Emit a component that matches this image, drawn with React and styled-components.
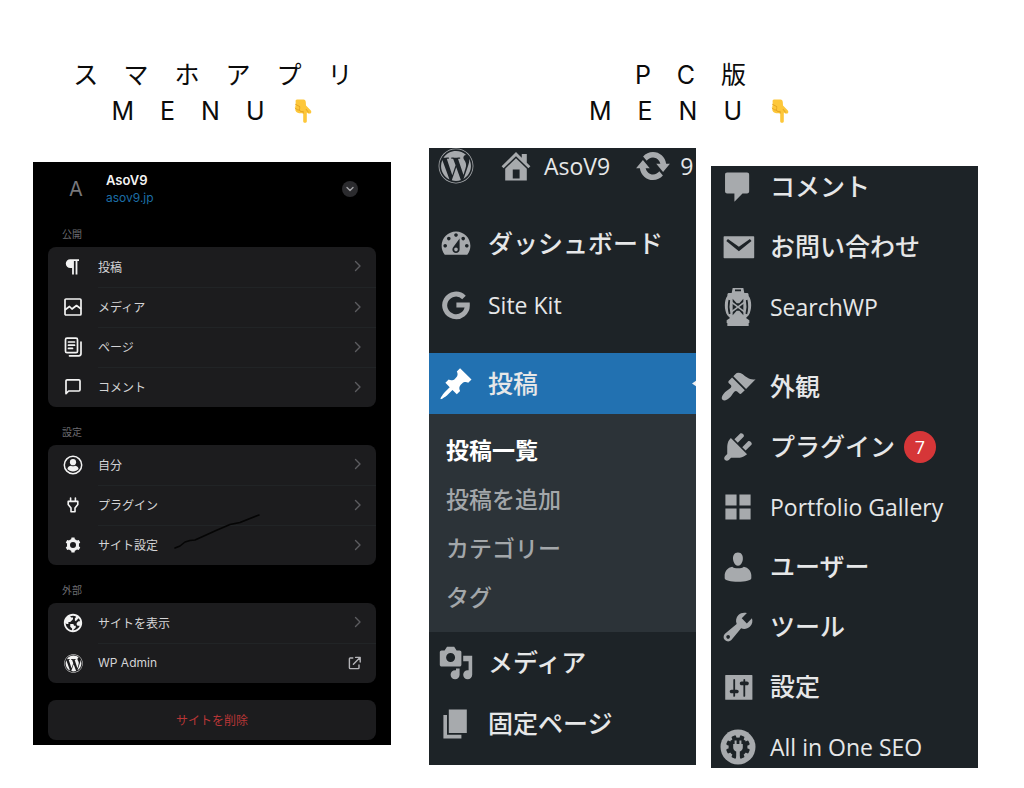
import React from "react";
import styled, { createGlobalStyle, css } from "styled-components";
import { FaWordpress } from "react-icons/fa";

const jp = `"Noto Sans CJK JP", sans-serif`;

const GlobalStyle = createGlobalStyle`
  *, *::before, *::after { box-sizing: border-box; }
  body { margin: 0; background: #fff; color: #0b0b0b; font-family: ${jp}; }
  a { color: inherit; text-decoration: none; }
  ul { list-style: none; margin: 0; padding: 0; }
  svg { display: block; flex: none; }
`;

/* ---------- page ---------- */

const Page = styled.main`
  display: flex;
  align-items: flex-start;
  gap: 38px;
  padding: 57px 46px 20px 33px;
`;

const Column = styled.section`
  flex: ${(p) => p.$grow} 1 0;
  min-width: 0;
`;

const Heading = styled.h1`
  margin: 0 0 ${(p) => p.$below}px;
  padding-left: ${(p) => p.$indent || 0}px;
  font-family: Inter, ${jp};
  font-weight: 400;
  font-size: 25px;
  line-height: 36px;
  letter-spacing: 26px;
  text-align: center;
  white-space: nowrap;
`;

const HeadingLine = styled.span`
  display: flex;
  justify-content: center;
`;

const Hand = styled.svg`
  width: 24px;
  height: 24px;
  margin: 6px 26px 0 0;
`;

const PointDown = () => (
  <Hand viewBox="0 0 24 24" role="img" aria-label="👇">
    <path
      d="M6 0.5H12.5C14 0.5 14.6 1.5 14.8 3.2L15 6.4L19.6 11.2C20.8 12.6 20.4 14.2 18.9 14.6C17.6 15 16.6 14.4 15.8 13.6V22.2C15.8 24.4 12.2 24.4 12.2 22.2V14.2H8.2C6 14 4.2 12.4 4.2 10C4 8 4.4 6.6 4.8 5.4L4.6 2.4C4.6 1.2 5 0.5 6 0.5Z"
      fill="#fdc73a"
    />
    <path
      d="M4.6 5.4L8 7.2M4.4 9.2C5.6 10.8 7 11.2 8.4 11M8.6 7.4C9 9 8.4 10.2 8.4 11C8.8 12.6 11 13 12.2 12.4V14.2M15.2 10.4L17.4 13.2"
      fill="none"
      stroke="#e5a522"
      strokeWidth="1"
      strokeLinecap="round"
    />
  </Hand>
);

/* ---------- phone app menu ---------- */

const Phone = styled.nav`
  padding: 0 15px 5px;
  background: #000;
  color: #d4d4d6;
  font-family: Inter, ${jp};
  font-size: 12px;
`;

const SiteHeader = styled.header`
  display: flex;
  align-items: center;
  height: 47px;
  padding: 7px 18px 0 21px;
`;

const SiteInitial = styled.span`
  width: 37px;
  color: #77777b;
  font-size: 20px;
  line-height: 24px;
`;

const SiteText = styled.div`
  flex: 1;
  display: flex;
  flex-direction: column;
  line-height: 18px;
`;

const SiteName = styled.strong`
  color: #f4f4f4;
  font-size: 13px;
  font-weight: 600;
`;

const SiteLink = styled.a`
  && { color: #1c6ea6; }
`;

const RoundButton = styled.button`
  display: grid;
  place-items: center;
  width: 16px;
  height: 16px;
  padding: 0;
  border: 0;
  border-radius: 50%;
  background: #2b2b2e;
  color: #a6a6aa;
`;

const GroupTitle = styled.h2`
  margin: 12px 0 0;
  padding-left: 14px;
  color: #6c6c70;
  font-size: 10px;
  font-weight: 400;
  line-height: 26px;
`;

const Card = styled.ul`
  position: relative;
  border-radius: 8px;
  background: #1c1c1e;
`;

const AppRow = styled.a`
  display: flex;
  align-items: center;
  height: 40px;
`;

const AppIcon = styled.span`
  display: grid;
  place-items: center;
  width: 50px;
  color: #f2f2f2;
`;

const AppLabel = styled.span`
  flex: 1;
  display: flex;
  align-items: center;
  justify-content: space-between;
  height: 40px;
  padding: 0 14px 2px 0;
  font-weight: 400;
  li + li & { border-top: 1px solid #212426; }
`;

const DeleteButton = styled.button`
  display: block;
  width: 100%;
  height: 40px;
  margin-top: 17px;
  padding: 0 0 2px;
  border: 0;
  border-radius: 8px;
  background: #1c1c1e;
  color: #b93636;
  font: 400 12px ${jp};
`;

const Scribble = styled.svg`
  position: absolute;
  left: 126px;
  top: 69px;
`;

const line = { fill: "none", stroke: "currentColor", strokeLinecap: "round", strokeLinejoin: "round" };

const Chevron = () => (
  <svg width="8" height="12" viewBox="0 0 8 12" {...line} stroke="#5c5c60" strokeWidth="1.4">
    <path d="M1.5 1.5L6 6L1.5 10.5" />
  </svg>
);

const External = () => (
  <svg width="14" height="14" viewBox="0 0 14 14" {...line} stroke="#b4b4b8" strokeWidth="1.4">
    <path d="M4.8 2H2.2Q1.4 2 1.4 2.8V11.8Q1.4 12.6 2.2 12.6H10.2Q11 12.6 11 11.8V9M7.6 1.4H12.2V6M12 1.6L5.4 8.2" />
  </svg>
);

const appIcons = {
  posts: (
    <svg width="20" height="20" viewBox="0 0 20 20" fill="currentColor">
      <path d="M7.2 2.2H16V4H14.4V17.5H12.6V4H10.9V17.5H9.1V11H7.2A4.4 4.4 0 0 1 7.2 2.2Z" />
    </svg>
  ),
  media: (
    <svg width="20" height="20" viewBox="0 0 20 20" {...line} strokeWidth="1.7">
      <rect x="2" y="2" width="16" height="16" rx="1" />
      <path d="M2.5 12.5L6.500 9.5L9 12L13.500 8.5L17.500 11.5" />
    </svg>
  ),
  pages: (
    <svg width="20" height="20" viewBox="0 0 20 20" {...line} strokeWidth="1.7">
      <rect x="2.5" y="1.2" width="12" height="14.500" rx="1.5" />
      <path d="M5.5 5H11.5M5.5 8.2H11.5M5.5 11.4H9.5M18 5V16.500Q18 18.8 15.700 18.8H6.500" />
    </svg>
  ),
  comments: (
    <svg width="20" height="20" viewBox="0 0 20 20" {...line} strokeWidth="1.7">
      <path d="M3 16.600V4Q3 2.800 4.200 2.800H15.800Q17 2.800 17 4V12.800Q17 14 15.800 14H5.600Z" />
    </svg>
  ),
  me: (
    <svg width="20" height="20" viewBox="0 0 20 20" fill="currentColor">
      <circle cx="10" cy="10" r="8.700" fill="none" stroke="currentColor" strokeWidth="1.500" />
      <circle cx="10" cy="7.200" r="3.100" />
      <path d="M4.400 14C4.700 11.600 6.600 10.700 8 10.700C9 11.500 11 11.500 12 10.700C13.400 10.700 15.300 11.600 15.600 14C13 17.200 7 17.200 4.400 14Z" />
    </svg>
  ),
  plugins: (
    <svg width="20" height="20" viewBox="0 0 20 20" {...line} strokeWidth="1.6">
      <path d="M7.6 3V6M12.4 3V6M5.2 6.4H14.8V9.4L12 13V16.8H8V13L5.2 9.4Z" />
    </svg>
  ),
  settings: (
    <svg width="18" height="18" viewBox="0 0 24 24" fill="currentColor">
      <path d="M20 12c0-.568-.06-1.122-.174-1.656l1.834-1.612-2-3.464-2.322.786c-.819-.736-1.787-1.308-2.859-1.657L14 2h-4l-.48 2.396c-1.07.35-2.04.92-2.858 1.657L4.34 5.268l-2 3.464 1.834 1.612C4.06 10.878 4 11.432 4 12s.06 1.122.174 1.656L2.34 15.268l2 3.464 2.322-.786c.819.736 1.787 1.308 2.859 1.657L10 22h4l.48-2.396c1.07-.35 2.038-.921 2.858-1.657l2.322.786 2-3.464-1.834-1.613A7.92 7.92 0 0020 12zm-8 4a4 4 0 110-8 4 4 0 010 8z" />
    </svg>
  ),
  globe: (
    <svg width="22" height="22" viewBox="0 0 24 24" fill="currentColor">
      <path d="M12 2C6.477 2 2 6.477 2 12s4.477 10 10 10 10-4.477 10-10S17.523 2 12 2zm0 18l2-2 1-1v-2h-2v-1l-1-1H9v3l2 2v1.931C7.06 19.436 4 16.072 4 12l1 1h2v-2h2l3-3V6h-2L9 5v-.411a7.945 7.945 0 016 0V6l-1 1v2l1 1 3.13-3.13A7.983 7.983 0 0119.736 10H18l-2 2v2l1 1h2l.286.286C18.029 18.061 15.239 20 12 20z" />
    </svg>
  ),
  wordpress: <FaWordpress size={19} />,
};

const appGroups = [
  {
    title: "公開",
    items: [
      ["posts", "投稿"],
      ["media", "メディア"],
      ["pages", "ページ"],
      ["comments", "コメント"],
    ],
  },
  {
    title: "設定",
    marked: true,
    items: [
      ["me", "自分"],
      ["plugins", "プラグイン"],
      ["settings", "サイト設定"],
    ],
  },
  {
    title: "外部",
    items: [
      ["globe", "サイトを表示"],
      ["wordpress", "WP Admin", true],
    ],
  },
];

const PhoneMenu = () => (
  <Phone aria-label="スマホアプリ">
    <SiteHeader>
      <SiteInitial>A</SiteInitial>
      <SiteText>
        <SiteName>AsoV9</SiteName>
        <SiteLink href="#site">asov9.jp</SiteLink>
      </SiteText>
      <RoundButton type="button" aria-label="AsoV9">
        <svg width="8" height="6" viewBox="0 0 8 6" {...line} strokeWidth="1.4">
          <path d="M1 1.5L4 4.5L7 1.5" />
        </svg>
      </RoundButton>
    </SiteHeader>
    {appGroups.map((group) => (
      <React.Fragment key={group.title}>
        <GroupTitle>{group.title}</GroupTitle>
        <Card>
          {group.items.map(([icon, label, external]) => (
            <li key={label}>
              <AppRow href={`#app-${icon}`}>
                <AppIcon>{appIcons[icon]}</AppIcon>
                <AppLabel>
                  {label}
                  {external ? <External /> : <Chevron />}
                </AppLabel>
              </AppRow>
            </li>
          ))}
          {group.marked && (
            <Scribble width="88" height="36" viewBox="0 0 88 36" {...line} stroke="#050505" strokeWidth="1.6">
              <path d="M1 34L6 32L11 28L16 26.5L21 26L31 21.5L42 16.5L56 10.5L66 8.5L76 4.5L85 1" />
            </Scribble>
          )}
        </Card>
      </React.Fragment>
    ))}
    <DeleteButton type="button">サイトを削除</DeleteButton>
  </Phone>
);

/* ---------- WordPress admin menu ---------- */

const Panels = styled.div`
  display: flex;
  align-items: flex-start;
  gap: 15px;
`;

const AdminPanel = styled.nav`
  flex: 1 1 0;
  min-width: 0;
  overflow: hidden;
  margin-top: ${(p) => p.$drop || 0}px;
  padding-bottom: ${(p) => p.$foot || 0}px;
  background: #1d2327;
  color: #e6e7e8;
  font-size: 25px;
  font-weight: 500;
  white-space: nowrap;
`;

const latin = css`
  font-family: "Open Sans", ${jp};
  font-size: 23px;
`;

const Toolbar = styled.div`
  display: flex;
  align-items: center;
  height: 36px;
  margin-bottom: 29px;
  color: #a7aaad;
`;

const ToolbarLink = styled.a`
  display: flex;
  align-items: center;
  gap: ${(p) => p.$gap}px;
  margin-left: ${(p) => p.$before}px;
  ${latin}
`;

const ToolbarText = styled.span`
  color: #e6e7e8;
`;

const IconSlot = styled.span`
  display: grid;
  place-items: center;
  flex: none;
  width: 54px;
  color: ${(p) => (p.$active ? "#fff" : "#a7aaad")};
`;

const MenuList = styled.ul`
  margin: ${(p) => (p.$cropped ? "-9px 0" : "0")};
`;

const MenuItem = styled.li`
  margin-top: ${(p) => p.$space || 0}px;
`;

const MenuLink = styled.a`
  position: relative;
  display: flex;
  align-items: center;
  gap: 5px;
  height: ${(p) => p.$height}px;
  background: ${(p) => (p.$active ? "#2271b1" : "transparent")};
`;

const MenuLabel = styled.span`
  padding-bottom: 4px;
  ${(p) => p.$latin && css`${latin} padding: 0;`}
`;

const ActiveNotch = styled.span`
  position: absolute;
  right: -8px;
  top: 50%;
  width: 16px;
  height: 16px;
  margin-top: -8px;
  background: #f0f0f1;
  clip-path: polygon(25% 50%, 100% 0, 100% 100%);
`;

const Badge = styled.span`
  display: grid;
  place-items: center;
  width: 32px;
  height: 32px;
  margin-left: 4px;
  border-radius: 50%;
  background: #d63638;
  color: #fff;
  font: 500 18px "Open Sans", sans-serif;
`;

const Submenu = styled.ul`
  padding: 11px 0;
  background: #2c3338;
`;

const SubLink = styled.a`
  display: block;
  padding-left: 17px;
  font-size: 23px;
  line-height: 49px;
  ${(p) => (p.$current ? "font-weight: 700; && { color: #fff; }" : "&& { color: #a3a7aa; }")}
`;

const Dash = ({ d, children }) => (
  <svg width="36" height="36" viewBox="0 0 20 20" fill="currentColor" fillRule="evenodd">
    {d ? <path d={d} /> : children}
  </svg>
);

const HomeIcon = () => (
  <Dash d="M16 8.2l2 2-1.100 1.100L10 4.6l-6.900 6.700-1.100-1.100L10 2.200l3.200 3.200V3.300H16v4.900zm-6-2.560l6 5.900V18H4v-6.460zM12 17v-5H8.200v5H12z" />
);

const UpdateIcon = () => (
  <svg width="36" height="36" viewBox="0 0 20 20" fill="currentColor">
    <path d="M10 2.200c3.700 0 6.800 2.700 7.300 6.600h2.100L15.600 13.400 11.800 8.800h2.300C13.600 6.900 12 5.300 10 5.300c-1.500 0-2.700.7-3.500 1.800L4.500 4.700C5.900 3.100 7.800 2.200 10 2.200zM10 17.800c-3.700 0-6.800-2.700-7.300-6.600H.6L4.400 6.600 8.200 11.200H5.900C6.400 13.100 8 14.700 10 14.700c1.500 0 2.700-.7 3.500-1.800l2 2.400C14.100 16.900 12.200 17.800 10 17.800z" />
  </svg>
);

const adminIcons = {
  dashboard: (
    <Dash d="M3.76 16h12.48c1.1-1.37 1.76-3.11 1.76-5 0-4.42-3.58-8-8-8s-8 3.58-8 8c0 1.89.66 3.63 1.76 5zM10 4c.55 0 1 .45 1 1s-.45 1-1 1-1-.45-1-1 .45-1 1-1zM6 6c.55 0 1 .45 1 1s-.45 1-1 1-1-.45-1-1 .45-1 1-1zm8 0c.55 0 1 .45 1 1s-.45 1-1 1-1-.45-1-1 .45-1 1-1zm-5.37 5.55L12 7v6c0 1.1-.9 2-2 2s-2-.9-2-2c0-.57.24-1.08.63-1.45zM4 10c.55 0 1 .45 1 1s-.45 1-1 1-1-.45-1-1 .45-1 1-1zm12 0c.55 0 1 .45 1 1s-.45 1-1 1-1-.45-1-1 .45-1 1-1zm-5 3c0-.55-.45-1-1-1s-1 .45-1 1 .45 1 1 1 1-.45 1-1z" />
  ),
  sitekit: (
    <svg width="30" height="30" viewBox="0 0 30 30" fill="none" stroke="currentColor" strokeWidth="5">
      <path d="M23 7.4A11.3 11.3 0 1 0 26.3 15.1H15.4" />
    </svg>
  ),
  post: (
    <Dash d="M10.44 3.02l1.82-1.82 6.36 6.35-1.83 1.82c-1.05-.68-2.48-.57-3.41.36l-.75.75c-.92.93-1.04 2.35-.35 3.41l-1.83 1.82-2.41-2.41-2.8 2.79c-.42.42-3.38 2.71-3.8 2.29s1.86-3.39 2.28-3.81l2.79-2.79L4.1 9.36l1.83-1.82c1.05.69 2.48.57 3.4-.36l.75-.75c.93-.92 1.05-2.35.36-3.41z" />
  ),
  media: (
    <Dash d="M13 11V4c0-.55-.45-1-1-1h-1.67L9 1H5L3.67 3H2c-.55 0-1 .45-1 1v7c0 .55.45 1 1 1h10c.55 0 1-.45 1-1zM7 4.5c1.38 0 2.5 1.12 2.5 2.5S8.38 9.5 7 9.5 4.5 8.38 4.5 7 5.62 4.5 7 4.5zM14 6h5v10.5c0 1.38-1.12 2.5-2.5 2.5S14 17.88 14 16.5s1.12-2.5 2.5-2.5c.17 0 .34.02.5.05V9h-3V6zm-4 8.05V13h2v3.5c0 1.38-1.12 2.5-2.5 2.5S7 17.88 7 16.5 8.12 14 9.5 14c.17 0 .34.02.5.05z" />
  ),
  page: <Dash d="M6 15V2h10v13H6zm-1 1h8v2H3V5h2v11z" />,
  comments: (
    <Dash d="M4 2h11c.8 0 1.200.4 1.200 1.200v9.200c0 .8-.4 1.200-1.200 1.200h-2.500L8 18.200v-4.600H4c-.8 0-1.200-.4-1.200-1.200V3.200C2.800 2.400 3.200 2 4 2z" />
  ),
  email: (
    <Dash d="M2.400 4H18.600C18.900 4 19 4.100 19 4.400V15.800C19 16.100 18.900 16.200 18.600 16.200H2.400C2.100 16.200 2 16.100 2 15.800V4.400C2 4.100 2.100 4 2.400 4zM10.500 12.400L17.500 6.600 16.600 5.500 10.500 9.900 4.400 5.500 3.500 6.600z" />
  ),
  searchwp: (
    <svg width="28" height="38" viewBox="0 0 84 114" fill="currentColor">
      <path d="M26 0H58L61 15H70C73 15 74 19 74 24C84 36 84 66 74 82L66 90L76 97V105H74V114H10V105H8V97L18 90L10 82C0 66 0 36 10 24C10 19 11 15 14 15H23Z" />
      <path
        d="M33 7H51M16 36C13 50 13 64 17 78M68 36C71 50 71 64 67 78"
        fill="none"
        stroke="#1d2327"
        strokeWidth="5"
      />
      <path d="M26 32L38 46H46L58 32V82L46 68H38L26 82Z" fill="#1d2327" />
      <path d="M23 40L42 54L61 40V46L46 57L61 68V74L42 60L23 74V68L38 57L23 46Z" />
    </svg>
  ),
  appearance: (
    <Dash d="M14.48 11.06L7.41 3.99l1.5-1.5c.5-.56 2.3-.47 3.51.32 1.21.8 1.43 1.28 2.91 2.1 1.18.64 2.45 1.26 4.45.85zm-.71.71L6.7 4.7 4.93 6.47c-.39.39-.39 1.02 0 1.41l1.06 1.06c.39.39.39 1.03 0 1.42-.6.6-1.43 1.11-2.21 1.69-.35.26-.7.53-1.01.84C1.43 14.23.4 16.08 1.4 17.07c.99 1 2.84-.03 4.18-1.36.31-.31.58-.66.85-1.02.57-.78 1.08-1.61 1.69-2.21.39-.39 1.02-.39 1.41 0l1.06 1.06c.39.39 1.02.39 1.41 0z" />
  ),
  plugins: (
    <Dash d="M13.11 4.36L9.87 7.6 8 5.73l3.24-3.24c.35-.34 1.05-.2 1.56.32.52.51.66 1.21.31 1.55zm-8 1.77l.91-1.12 9.01 9.01-1.19.84c-.71.71-2.63 1.16-3.82 1.16H6.14L4.9 17.26c-.59.59-1.54.59-2.12 0-.59-.58-.59-1.53 0-2.12l1.24-1.24v-3.88c0-1.13.4-3.19 1.09-3.89zm7.26 3.97l3.24-3.24c.34-.35 1.04-.21 1.55.31.52.51.66 1.21.31 1.55l-3.24 3.25z" />
  ),
  gallery: <Dash d="M3 3h6.2v6.2H3zM10.8 3H17v6.2h-6.2zM3 10.8h6.2V17H3zM10.8 10.8H17V17h-6.2z" />,
  users: (
    <Dash d="M10 9.25c-2.27 0-2.73-3.44-2.73-3.44C7 4.02 7.82 2 9.97 2c2.16 0 2.98 2.02 2.71 3.81 0 0-.41 3.44-2.68 3.44zM6.800 9.800C7.800 11 12.200 11 13.200 9.800C15.600 10.200 17.400 12.400 17.400 14.600V16.200C17.400 17.300 14 18.200 10 18.200S2.600 17.300 2.600 16.200V14.600C2.600 12.400 4.400 10.200 6.800 9.800z" />
  ),
  tools: (
    <Dash d="M16.68 9.77c-1.34 1.34-3.3 1.67-4.95.99l-5.41 6.52c-.99.99-2.59.99-3.58 0s-.99-2.59 0-3.57l6.52-5.42c-.68-1.65-.35-3.61.99-4.95 1.28-1.28 3.12-1.62 4.72-1.06l-2.89 2.89 2.82 2.82 2.86-2.87c.53 1.58.18 3.39-1.08 4.65zM3.81 16.21c.4.39 1.04.39 1.43 0 .4-.4.4-1.04 0-1.43-.39-.4-1.03-.4-1.43 0-.39.39-.39 1.03 0 1.43z" />
  ),
  settings: (
    <Dash d="M18 16.800V3.600c0-.2-.1-.3-.3-.3H3.200c-.2 0-.3.1-.3.3v13.200c0 .2.1.3.3.3h14.500c.2 0 .3-.1.3-.3zM8.400 11.500h1c.55 0 1 .45 1 1s-.45 1-1 1h-1V15c0 .28-.22.5-.5.5s-.5-.22-.5-.5v-1.500h-1c-.55 0-1-.45-1-1s.45-1 1-1h1V6c0-.28.22-.5.5-.5s.5.22.5.5v5.500zm4.600-2.500h-1c-.55 0-1-.45-1-1s.45-1 1-1h1V6c0-.28.22-.5.5-.5s.5.22.5.5v1h1c.55 0 1 .45 1 1s-.45 1-1 1h-1v6c0 .28-.22.5-.5.5s-.5-.22-.5-.5V9z" />
  ),
  seo: (
    <svg width="36" height="36" viewBox="0 0 36 36">
      <circle cx="18" cy="18" r="17.5" fill="currentColor" />
      <g fill="#1d2327">
        <circle cx="18" cy="18" r="9.5" />
        {[22.5, 67.5, 112.5, 157.5, 202.5, 247.5, 292.5, 337.5].map((turn) => (
          <rect key={turn} x="15.7" y="6" width="4.6" height="6" rx="1" transform={`rotate(${turn} 18 18)`} />
        ))}
      </g>
      <path
        d="M14.6 11.500H16.600V15H19.400V11.500H21.400V15H22.800V18.500C22.800 20.600 21.400 22 19.800 22.600V31H16.200V22.600C14.600 22 13.200 20.600 13.200 18.500V15H14.600Z"
        fill="currentColor"
      />
    </svg>
  ),
};

const mainMenu = [
  { icon: "dashboard", label: "ダッシュボード" },
  { icon: "sitekit", label: "Site Kit", latin: true },
  {
    icon: "post",
    label: "投稿",
    active: true,
    space: 18,
    children: ["投稿一覧", "投稿を追加", "カテゴリー", "タグ"],
  },
  { icon: "media", label: "メディア" },
  { icon: "page", label: "固定ページ" },
];

const moreMenu = [
  { icon: "comments", label: "コメント" },
  { icon: "email", label: "お問い合わせ" },
  { icon: "searchwp", label: "SearchWP", latin: true },
  { icon: "appearance", label: "外観", space: 20 },
  { icon: "plugins", label: "プラグイン", count: 7 },
  { icon: "gallery", label: "Portfolio Gallery", latin: true },
  { icon: "users", label: "ユーザー" },
  { icon: "tools", label: "ツール" },
  { icon: "settings", label: "設定" },
  { icon: "seo", label: "All in One SEO", latin: true },
];

const AdminMenu = ({ items, height, cropped }) => (
  <MenuList $cropped={cropped}>
    {items.map((item) => (
      <MenuItem key={item.label} $space={item.space}>
        <MenuLink href={`#${item.icon}`} $height={height} $active={item.active}>
          <IconSlot $active={item.active}>{adminIcons[item.icon]}</IconSlot>
          <MenuLabel $latin={item.latin}>{item.label}</MenuLabel>
          {item.count && <Badge>{item.count}</Badge>}
          {item.active && <ActiveNotch />}
        </MenuLink>
        {item.children && (
          <Submenu>
            {item.children.map((child, index) => (
              <li key={child}>
                <SubLink href="#posts" $current={index === 0}>
                  {child}
                </SubLink>
              </li>
            ))}
          </Submenu>
        )}
      </MenuItem>
    ))}
  </MenuList>
);

export default function App() {
  return (
    <>
      <GlobalStyle />
      <Page>
        <Column $grow={358}>
          <Heading $below={33} $indent={28}>
            <HeadingLine>スマホアプリ</HeadingLine>
            <HeadingLine>
              MENU
              <PointDown />
            </HeadingLine>
          </Heading>
          <PhoneMenu />
        </Column>
        <Column $grow={549}>
          <Heading $below={19}>
            <HeadingLine>PC版</HeadingLine>
            <HeadingLine>
              MENU
              <PointDown />
            </HeadingLine>
          </Heading>
          <Panels>
            <AdminPanel aria-label="PC版" $foot={11}>
              <Toolbar>
                <ToolbarLink href="#wordpress" $before={0} aria-label="WordPress">
                  <IconSlot>
                    <FaWordpress size={36} />
                  </IconSlot>
                </ToolbarLink>
                <ToolbarLink href="#home" $before={15} $gap={10}>
                  <HomeIcon />
                  <ToolbarText>AsoV9</ToolbarText>
                </ToolbarLink>
                <ToolbarLink href="#updates" $before={25} $gap={9}>
                  <UpdateIcon />
                  <ToolbarText>9</ToolbarText>
                </ToolbarLink>
              </Toolbar>
              <AdminMenu items={mainMenu} height={61} />
            </AdminPanel>
            <AdminPanel aria-label="PC版 2" $drop={18}>
              <AdminMenu items={moreMenu} height={60} cropped />
            </AdminPanel>
          </Panels>
        </Column>
      </Page>
    </>
  );
}
